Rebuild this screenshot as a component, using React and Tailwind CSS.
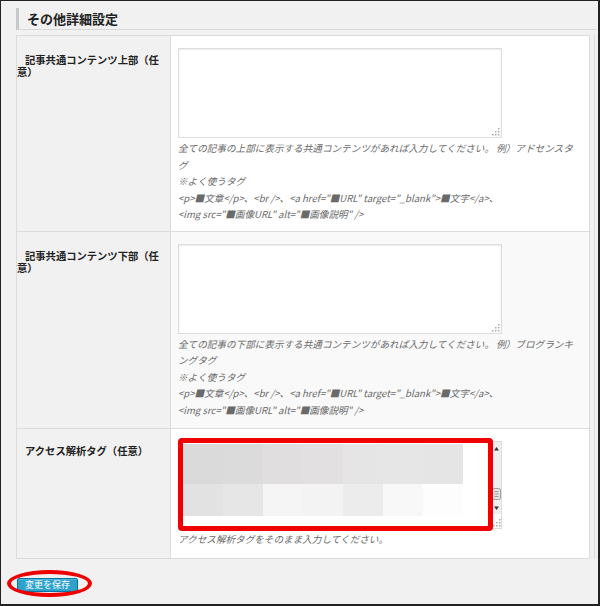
// その他詳細設定 panel
const tagLine1 = '<p>■文章</p>、<br />、<a href="■URL" target="_blank">■文字</a>、';
const tagLine2 = '<img src="■画像URL" alt="■画像説明" />';

const mosaicTop = ["bg-[#dadada]", "bg-[#dbdbdb]", "bg-[#e0dede]", "bg-[#e2e0e0]", "bg-[#e5e5e5]", "bg-[#e6e6e6]", "bg-[#e5e5e5]"];
const mosaicBottom = ["bg-[#e2e2e2]", "bg-[#e6e6e6]", "bg-[#f5f5f5]", "bg-[#f3f3f3]", "bg-[#ececec]", "bg-[#f8f8f8]", "bg-[#fdfdfd]"];
const gripDots = [[6, 0], [3, 3], [6, 3], [0, 6], [3, 6], [6, 6]];

//resize handle dots in the textarea corner
function Grip({ className }) {
  return (
    <svg width="8" height="8" className={className}>
      {gripDots.map(([x, y], i) => (
        <rect key={i} x={x} y={y} width="1.5" height="1.5" fill="#a8a8a8" />
      ))}
    </svg>
  );
}

function Scrollbar() {
  return (
    <svg width="9" height="86" className="absolute right-0 top-0">
      <rect x="0" y="0" width="9" height="72" fill="#efefef" />
      <path d="M2 8.5 L4.5 5 L7 8.5 Z" fill="#333" />
      <rect x="0.5" y="46.5" width="8" height="11" rx="1.5" fill="#e4e4e4" stroke="#a3a3a3" />
      <path d="M2.5 49.5 H6.5 M2.5 52 H6.5 M2.5 54.5 H6.5" stroke="#8a8a8a" strokeWidth="0.8" />
      <path d="M2 64.5 L4.5 68 L7 64.5 Z" fill="#333" />
      <g transform="translate(1 77)">
        {gripDots.map(([x, y], i) => (
          <rect key={i} x={x} y={y} width="1.5" height="1.5" fill="#a8a8a8" />
        ))}
      </g>
    </svg>
  );
}

function Note({ children }) {
  return (
    <div className="mt-[2px] text-[9.6px] leading-[16.5px] italic text-[#6a6a6a]">
      {children}
    </div>
  );
}

function Row({ label, first, pt, pb, children, tdBg }) {
  return (
    <div className={"flex " + (first ? "" : "border-t border-[#dcdcdc]")}>
      <div className={"w-[154px] shrink-0 border-r border-[#dcdcdc] bg-[#f1f1f1] pr-[8px] indent-[8px] text-[10.3px] font-bold leading-[12px] text-[#222] " + pt}>
        {label}
      </div>
      <div className={"flex-1 pl-[7px] pr-[8px] pt-[12px] " + pb + " " + tdBg}>
        {children}
      </div>
    </div>
  );
}

function TextBox() {
  return (
    <div className="relative w-[324px] h-[90px] border border-[#dcdcdc] bg-white shadow-[inset_0_1px_2px_rgba(0,0,0,0.07)]">
      <Grip className="absolute right-[1px] bottom-[1px]" />
    </div>
  );
}

export default function App() {
  return (
    <div className="w-[600px] h-[606px] box-border overflow-hidden bg-[#f1f1f1] border-t border-l border-r-2 border-b-2 border-[#222] pt-[7px] pl-[15px] pr-[2px] font-['Noto_Sans_CJK_JP','Noto_Sans',sans-serif]">

      <h2 className="h-[22px] border-l-[3px] border-l-[#c8c8c8] border-b border-b-[#d8d8d8] pl-[8px] text-[13px] font-bold leading-[21px] text-[#222]">
        その他詳細設定
      </h2>

      <div className="mt-[5px] flex">
        <div className="w-[574px] border border-[#dcdcdc]">

          <Row first label="記事共通コンテンツ上部（任意）" pt="pt-[18px]" pb="pb-[8px]" tdBg="bg-white">
            <TextBox />
            <Note>
              全ての記事の上部に表示する共通コンテンツがあれば入力してください。 例）アドセンスタグ
              <br />※よく使うタグ
              <br />{tagLine1}
              <br />{tagLine2}
            </Note>
          </Row>

          <Row label="記事共通コンテンツ下部（任意）" pt="pt-[18px]" pb="pb-[10px]" tdBg="bg-[#f9f9f9]">
            <TextBox />
            <Note>
              全ての記事の下部に表示する共通コンテンツがあれば入力してください。 例）ブログランキングタグ
              <br />※よく使うタグ
              <br />{tagLine1}
              <br />{tagLine2}
            </Note>
          </Row>

          <Row label="アクセス解析タグ（任意）" pt="pt-[16px]" pb="pb-[10px]" tdBg="bg-white">
            <div className="relative w-[324px] h-[88px] border border-[#dcdcdc] bg-white">
              <div className="absolute left-[4px] top-[2px] flex flex-col">
                <div className="flex h-[40px]">
                  {mosaicTop.map((c, i) => (
                    <div key={i} className={"w-[40px] " + c} />
                  ))}
                </div>
                <div className="flex h-[32px]">
                  {mosaicBottom.map((c, i) => (
                    <div key={i} className={"w-[40px] " + c} />
                  ))}
                </div>
              </div>
              <Scrollbar />
              {/* red annotation box */}
              <div className="absolute left-[-1px] top-[-4px] w-[315px] h-[93px] border-[5px] border-[#f00000] rounded-[4px]" />
            </div>
            <Note>アクセス解析タグをそのまま入力してください。</Note>
          </Row>

        </div>
        <div className="w-[5px] border-r border-[#dcdcdc]" />
      </div>

      <div className="relative mt-[19px] ml-[1px] flex w-fit">
        <button className="block h-[14px] px-[7px] bg-[#2ea2cc] border border-[#0074a2] rounded-[2px] text-white text-[9px] leading-[12px] shadow-[inset_0_1px_0_rgba(120,200,230,0.5)]">
          変更を保存
        </button>
        {/* red annotation ellipse */}
        <div className="absolute left-[-10px] top-[-8px] w-[85px] h-[27px] border-[4px] border-[#ee0000] rounded-[50%]" />
      </div>
    </div>
  );
}
